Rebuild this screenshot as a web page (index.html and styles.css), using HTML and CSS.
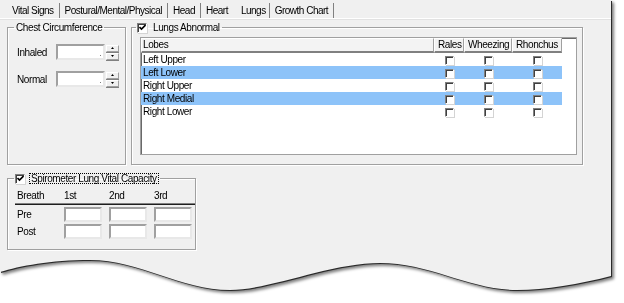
FILE: index.html
```html
<!DOCTYPE html>
<html lang="en">
<head>
    <meta charset="UTF-8">
    <title>Lungs</title>
    <link rel="stylesheet" href="styles.css">
</head>
<body>
    <div class="sheet">
        <div class="panel">
            <!-- Tab strip -->
            <div class="tabs">
                <span class="tab">Vital Signs</span>
                <span class="tab">Postural/Mental/Physical</span>
                <span class="tab">Head</span>
                <span class="tab no-sep">Heart</span>
                <span class="tab active">Lungs</span>
                <span class="tab">Growth Chart</span>
            </div>

            <div class="page">
                <div class="top-row">
                    <!-- Chest -->
                    <fieldset class="group chest">
                        <legend>Chest Circumference</legend>
                        <div class="measure">
                            <label>Inhaled</label>
                            <span class="field num"><i class="dot"></i></span>
                            <span class="spin">
                                <b><svg width="3" height="2" viewBox="0 0 3 2"><path d="M1.5 0 L3 2 L0 2 Z"/></svg></b>
                                <b><svg width="3" height="2" viewBox="0 0 3 2"><path d="M0 0 L3 0 L1.5 2 Z"/></svg></b>
                            </span>
                        </div>
                        <div class="measure">
                            <label>Normal</label>
                            <span class="field num"><i class="dot"></i></span>
                            <span class="spin">
                                <b><svg width="3" height="2" viewBox="0 0 3 2"><path d="M1.5 0 L3 2 L0 2 Z"/></svg></b>
                                <b><svg width="3" height="2" viewBox="0 0 3 2"><path d="M0 0 L3 0 L1.5 2 Z"/></svg></b>
                            </span>
                        </div>
                    </fieldset>

                    <!-- Lungs -->
                    <fieldset class="group lungs">
                        <legend>
                            <span class="check on"><svg width="7" height="7" viewBox="0 0 7 7"><path d="M0.5 3 L2.5 5 L6.5 1"/></svg></span>
                            Lungs Abnormal
                        </legend>
                        <div class="listview">
                            <table>
                                <thead>
                                    <tr>
                                        <th class="c-lobe">Lobes</th>
                                        <th class="c-rales">Rales</th>
                                        <th class="c-whz">Wheezing</th>
                                        <th class="c-rhon">Rhonchus</th>
                                    </tr>
                                </thead>
                                <tbody>
                                    <tr><td>Left Upper</td><td class="cb"><span class="check"></span></td><td class="cb"><span class="check"></span></td><td class="cb"><span class="check"></span></td></tr>
                                    <tr class="sel"><td>Left Lower</td><td class="cb"><span class="check"></span></td><td class="cb"><span class="check"></span></td><td class="cb"><span class="check"></span></td></tr>
                                    <tr><td>Right Upper</td><td class="cb"><span class="check"></span></td><td class="cb"><span class="check"></span></td><td class="cb"><span class="check"></span></td></tr>
                                    <tr class="sel"><td>Right Medial</td><td class="cb"><span class="check"></span></td><td class="cb"><span class="check"></span></td><td class="cb"><span class="check"></span></td></tr>
                                    <tr><td>Right Lower</td><td class="cb"><span class="check"></span></td><td class="cb"><span class="check"></span></td><td class="cb"><span class="check"></span></td></tr>
                                </tbody>
                            </table>
                        </div>
                    </fieldset>
                </div>

                <!-- Spirometer -->
                <fieldset class="group spiro">
                    <legend>
                        <span class="check on"><svg width="7" height="7" viewBox="0 0 7 7"><path d="M0.5 3 L2.5 5 L6.5 1"/></svg></span>
                        <span class="focus">Spirometer Lung Vital Capacity</span>
                    </legend>
                    <div class="spiro-grid">
                        <span>Breath</span><span>1st</span><span>2nd</span><span>3rd</span>
                        <div class="rule"></div>
                        <span class="first-row">Pre</span>
                        <span class="field first-row"></span>
                        <span class="field first-row"></span>
                        <span class="field first-row"></span>
                        <span class="next-row">Post</span>
                        <span class="field next-row"></span>
                        <span class="field next-row"></span>
                        <span class="field next-row"></span>
                    </div>
                </fieldset>
            </div>
        </div>
    </div>
</body>
</html>
```

FILE: styles.css
```css
/* Basic styling */
body {
    margin: 0;
    background-color: #fff;
}

/* Torn-off screenshot sheet */
.sheet {
    width: 624px;
    height: 303px;
    filter: drop-shadow(1px 1px 0 #2a2a2a) drop-shadow(2px 2px 1.5px rgba(0, 0, 0, 0.5));
}
.panel {
    width: 611px;
    height: 296px;
    background-color: #f0f0f0;
    clip-path: path('M0,0 H611 V276 C580,284 545,290 517,290 C470,290 430,263 380,263 C330,263 270,290 230,290 C180,290 140,260 90,260 C50,260 20,266 0,272 Z');
    font: 10px/13px "Liberation Sans", Arial, sans-serif;
    letter-spacing: -0.4px;
    color: #000;
}

/* Tabs */
.tabs {
    display: flex;
    align-items: flex-end;
    height: 18px;
    padding-left: 7px;
    border-bottom: 1px solid #fff;
    box-shadow: 0 1px 0 #e2e2e2;
    letter-spacing: -0.5px;
}
.tab {
    height: 15px;
    line-height: 15px;
    padding: 0 5px;
    border-right: 1px solid #808080;
    white-space: nowrap;
}
.tab.no-sep {
    border-right-color: transparent;
    padding-right: 4px;
}
.tab.active {
    padding: 0 3px 0 8px;
}

/* Page */
.page {
    padding: 2px 0 0 7px;
}
.top-row {
    display: grid;
    grid-template-columns: 119px 452px;
    column-gap: 5px;
    height: 144px;
}

/* Group boxes */
.group {
    margin: 0;
    min-width: 0;
    box-sizing: border-box;
    border: 1px solid #a0a0a0;
    box-shadow: inset 1px 1px 0 #fff, 1px 1px 0 #fff;
}
.group legend {
    display: flex;
    align-items: center;
    padding: 0 2px;
    line-height: 13px;
}

.chest {
    padding: 10px 0 0 9px;
}
.chest legend {
    margin-left: -3px;
}
.lungs {
    padding: 3px 0 0 8px;
}
.lungs legend {
    margin-left: -4px;
    padding: 0 2px 0 1px;
}

/* Chest measures */
.measure {
    display: flex;
    align-items: center;
    height: 16px;
    margin-bottom: 11px;
}
.measure label {
    width: 39px;
}
.field {
    display: flex;
    justify-content: flex-end;
    align-items: flex-end;
    box-sizing: border-box;
    background-color: #fff;
    border: 2px solid;
    border-color: #a0a0a0 #e8e8e8 #e8e8e8 #a0a0a0;
}
.field.num {
    width: 49px;
    height: 16px;
}
.dot {
    width: 1px;
    height: 1px;
    margin: 0 2px 2px 0;
    background-color: #808080;
}
.spin {
    display: flex;
    flex-direction: column;
    gap: 1px;
    width: 13px;
    margin-left: 1px;
}
.spin b {
    display: flex;
    justify-content: center;
    align-items: center;
    height: 7px;
    box-sizing: border-box;
    border: 1px solid;
    border-color: #fff #a0a0a0 #a0a0a0 #fff;
    box-shadow: 0 1px 0 #808080;
}

/* Checkboxes */
.check {
    display: inline-flex;
    justify-content: center;
    align-items: center;
    width: 9px;
    height: 9px;
    box-sizing: border-box;
    background-color: #fff;
    border: 1px solid;
    border-color: #808080 #fff #fff #808080;
    box-shadow: inset 1px 1px 0 #404040, 1px 1px 0 #d4d4d4;
    vertical-align: middle;
}
.check.on {
    width: 10px;
    height: 10px;
}
.check svg path {
    fill: none;
    stroke: #000;
    stroke-width: 1.6;
}
.lungs legend .check {
    margin-right: 6px;
}

/* List view */
.listview {
    width: 437px;
    height: 118px;
    box-sizing: border-box;
    background-color: #fff;
    border: 1px solid #a0a0a0;
    box-shadow: inset 1px 1px 0 #696969;
}
.listview table {
    table-layout: fixed;
    width: 421px;
    border-collapse: separate;
    border-spacing: 0;
}
.listview th {
    padding: 0 0 0 3px;
    line-height: 12px;
    font-weight: normal;
    text-align: left;
    background-color: #f3f3f3;
    border-style: solid;
    border-width: 1px 1px 2px 1px;
    border-color: #fff #a0a0a0 #808080 #fff;
    white-space: nowrap;
    overflow: hidden;
}
.listview th.c-lobe { width: 290px; padding-left: 1px; }
.listview th.c-rales { width: 25px; }
.listview th.c-whz { width: 43px; }
.listview th.c-rhon { width: 45px; }
.listview td {
    height: 13px;
    padding: 0 0 0 2px;
    line-height: 13px;
    white-space: nowrap;
}
.listview td.cb {
    padding: 0;
    text-align: center;
}
.listview tr.sel td {
    background-color: #8dc3f9;
}

/* Spirometer */
.spiro {
    width: 189px;
    height: 77px;
    margin-top: 8px;
    padding: 5px 0 0 9px;
}
.spiro legend {
    margin-left: -3px;
    padding: 0 1px;
    line-height: 11px;
}
.spiro .check {
    margin-right: 4px;
}
.focus {
    padding: 0 1px;
    line-height: 9px;
    border: 1px dotted #000;
}
.spiro-grid {
    display: grid;
    grid-template-columns: 40px 38px 38px 38px;
    column-gap: 7px;
    align-items: center;
}
.rule {
    grid-column: 1 / -1;
    margin: 1px -3px 0 -2px;
    border-top: 1px solid #808080;
    border-bottom: 1px solid #1e1e1e;
}
.spiro-grid .field {
    height: 15px;
}
.spiro-grid .first-row {
    margin-top: 2px;
}
.spiro-grid .next-row {
    margin-top: 2px;
}
```
